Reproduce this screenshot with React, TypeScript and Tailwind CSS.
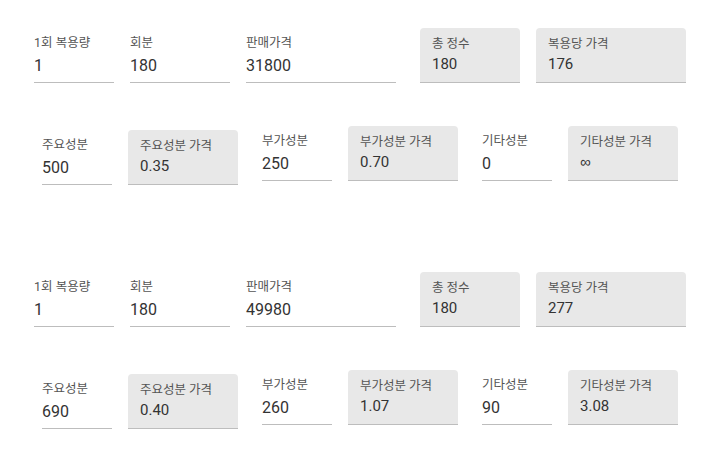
import React from "react";

type Item = {
  label: string;
  value: string;
  width: string;
  gap?: string;
  filled?: boolean;
  lift?: boolean;
};

const Field = ({ label, value, width, lift }: Item) => (
  <div className={`flex flex-col ${width} ${lift ? "mb-1" : ""}`}>
    <span className="text-[12.5px] leading-4 text-[#555]">{label}</span>
    <span className="mt-[3px] border-b border-[#bdbdbd] pb-1 text-base leading-6 text-[#333]">
      {value}
    </span>
  </div>
);

const FilledField = ({ label, value, width, lift }: Item) => (
  <div
    className={`flex h-[55px] flex-col rounded-t-[4px] border-b border-[#bdbdbd] bg-[#e8e8e8] px-3 pt-2 ${width} ${
      lift ? "mb-1" : ""
    }`}
  >
    <span className="text-[12.5px] leading-4 text-[#555]">{label}</span>
    {value == "∞" ? (
      <span className="mt-[2px] font-['Liberation_Sans'] text-[15px] leading-5 text-[#333]">∞</span>
    ) : (
      <span className="mt-[2px] text-[15px] leading-5 text-[#333]">{value}</span>
    )}
  </div>
);

const Row = ({ items, className }: { items: Item[]; className: string }) => (
  <div className={`flex items-end ${className}`}>
    {items.map((item) => (
      <div key={item.label} className={`flex ${item.gap ?? ""}`}>
        {item.filled ? <FilledField {...item} /> : <Field {...item} />}
      </div>
    ))}
  </div>
);

const groups = [
  {
    top: ["1", "180", "31800", "180", "176"],
    bottom: ["500", "0.35", "250", "0.70", "0", "∞"],
  },
  {
    top: ["1", "180", "49980", "180", "277"],
    bottom: ["690", "0.40", "260", "1.07", "90", "3.08"],
  },
];

const App = () => {
  return (
    <div
      className="h-[460px] w-[717px] overflow-hidden bg-white"
      style={{ fontFamily: 'Roboto, "Noto Sans CJK KR", sans-serif' }}
    >
      {groups.map((g, i) => {
        const topItems: Item[] = [
          { label: "1회 복용량", value: g.top[0], width: "w-[80px]" },
          { label: "회분", value: g.top[1], width: "w-[100px]", gap: "ml-4" },
          { label: "판매가격", value: g.top[2], width: "w-[150px]", gap: "ml-4" },
          { label: "총 정수", value: g.top[3], width: "w-[100px]", gap: "ml-6", filled: true },
          { label: "복용당 가격", value: g.top[4], width: "w-[150px]", gap: "ml-4", filled: true },
        ];
        const bottomItems: Item[] = [
          { label: "주요성분", value: g.bottom[0], width: "w-[70px]" },
          { label: "주요성분 가격", value: g.bottom[1], width: "w-[110px]", gap: "ml-4", filled: true },
          { label: "부가성분", value: g.bottom[2], width: "w-[70px]", gap: "ml-6", lift: true },
          {
            label: "부가성분 가격",
            value: g.bottom[3],
            width: "w-[110px]",
            gap: "ml-4",
            filled: true,
            lift: true,
          },
          { label: "기타성분", value: g.bottom[4], width: "w-[70px]", gap: "ml-6", lift: true },
          {
            label: "기타성분 가격",
            value: g.bottom[5],
            width: "w-[110px]",
            gap: "ml-4",
            filled: true,
            lift: true,
          },
        ];
        return (
          <div key={i} className="flex h-[244px] flex-col pt-[28px]">
            <Row items={topItems} className="pl-[34px]" />
            <Row items={bottomItems} className="mt-[43px] pl-[42px]" />
          </div>
        );
      })}
    </div>
  );
};

export default App;
